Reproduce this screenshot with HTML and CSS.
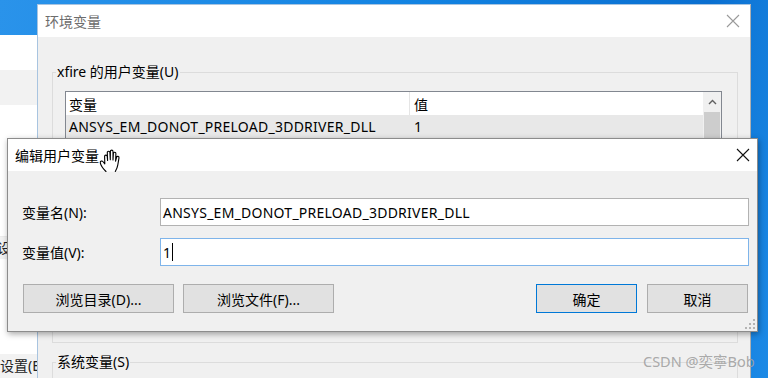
FILE: index.html
```html
<!DOCTYPE html>
<html lang="zh-CN">
<head>
<meta charset="utf-8">
<title>编辑用户变量</title>
<link rel="stylesheet" href="styles.css">
</head>
<body>
<div class="desktop">
  <div class="bgwin">
    <div class="bg-white h35"></div>
    <div class="bg-grey h35"></div>
    <div class="bg-white h132"></div>
    <div class="bg-grey h22 bgtext">设</div>
    <div class="bg-white h95"></div>
    <div class="bg-grey h24 bgtext">设置(E</div>
  </div>

  <div class="envwin">
    <div class="titlebar inactive">
      <span class="title">环境变量</span>
      <svg class="close" width="14" height="14" viewBox="0 0 14 14"><path d="M1 1L13 13M13 1L1 13" stroke="#9a9a9a" stroke-width="1.1" fill="none"/></svg>
    </div>
    <div class="envbody">
      <fieldset class="group user">
        <legend>xfire 的用户变量(U)</legend>
        <div class="listview">
          <div class="lv-main">
            <div class="lv-row lv-head"><span class="c1">变量</span><span class="c2">值</span></div>
            <div class="lv-row lv-sel"><span class="c1 latin">ANSYS_EM_DONOT_PRELOAD_3DDRIVER_DLL</span><span class="c2">1</span></div>
          </div>
          <div class="scrollbar">
            <div class="sb-up"><svg width="9" height="6" viewBox="0 0 9 6"><path d="M1 5L4.5 1.5L8 5" stroke="#606060" stroke-width="1.4" fill="none"/></svg></div>
            <div class="sb-thumb"></div>
          </div>
        </div>
      </fieldset>
      <fieldset class="group sys">
        <legend>系统变量(S)</legend>
      </fieldset>
    </div>
  </div>

  <div class="editwin">
    <div class="titlebar">
      <span class="title">编辑用户变量</span>
      <svg class="close" width="14" height="14" viewBox="0 0 14 14"><path d="M1 1L13 13M13 1L1 13" stroke="#111" stroke-width="1.1" fill="none"/></svg>
    </div>
    <div class="editbody">
      <div class="form">
        <label class="lbl">变量名(N):</label>
        <div class="input latin">ANSYS_EM_DONOT_PRELOAD_3DDRIVER_DLL</div>
        <label class="lbl">变量值(V):</label>
        <div class="input focus">1<span class="caret"></span></div>
      </div>
      <div class="buttons">
        <div class="btn wide">浏览目录(D)...</div>
        <div class="btn wide2">浏览文件(F)...</div>
        <div class="spacer"></div>
        <div class="btn small default">确定</div>
        <div class="btn small">取消</div>
      </div>
    </div>
    <svg class="grip" width="10" height="10" viewBox="0 0 10 10" fill="#b4b4b4">
      <rect x="8" y="0" width="2" height="2"/>
      <rect x="4" y="4" width="2" height="2"/><rect x="8" y="4" width="2" height="2"/>
      <rect x="0" y="8" width="2" height="2"/><rect x="4" y="8" width="2" height="2"/><rect x="8" y="8" width="2" height="2"/>
    </svg>
  </div>

  <svg class="hand" width="24" height="25" viewBox="0 0 24 25">
    <path d="M7 23.5C4.5 21 1.8 17.5 1.3 14.8C1 13 3 12.4 4.3 14L5.8 15.8L5.6 8.5C5.5 6.8 8 6.6 8.2 8.3L8.6 12.5L8.3 4.6C8.2 2.9 10.8 2.8 10.9 4.5L11.3 11.8L11.4 3.4C11.4 1.7 14 1.7 14 3.4L14 12L14.4 5.4C14.5 3.8 17 3.9 16.9 5.6L16.6 13.2L17.6 9.2C18 7.8 20.3 8.2 20 9.8L18.8 16.8C18.3 19.8 17.3 21.8 16.3 23.5" fill="#fff" stroke="#000" stroke-width="1.1" stroke-linejoin="round" stroke-linecap="round"/>
  </svg>

  <div class="watermark">CSDN @奕寧Bob</div>
</div>
</body>
</html>
```

FILE: styles.css
```css
* { box-sizing: border-box; }
html, body { margin: 0; padding: 0; }
body {
  width: 768px;
  height: 378px;
  overflow: hidden;
  font-family: "Noto Sans", "Noto Sans CJK SC", sans-serif;
  font-size: 14px;
  color: #000;
}
.desktop {
  position: relative;
  width: 768px;
  height: 378px;
  background: linear-gradient(100deg, #2a93ea 0%, #1283e2 50%, #0a6fd0 85%, #1c8ae6 100%);
  overflow: hidden;
}

/* background settings window */
.bgwin {
  position: absolute;
  left: 0;
  top: 35px;
  width: 60px;
  height: 343px;
  display: flex;
  flex-direction: column;
}
.bg-white { background: #ffffff; }
.bg-grey { background: #f2f2f2; }
.h35 { height: 35px; }
.h132 { height: 132px; border-bottom: 1px solid #ececec; }
.h22 { height: 22px; }
.h95 { height: 95px; }
.h24 { height: 24px; }
.bgtext {
  font-size: 14px;
  line-height: 22px;
  color: #222;
  white-space: nowrap;
  padding-left: 0;
}
.h22.bgtext { text-indent: -3px; }
.h24.bgtext { line-height: 24px; }

.latin { letter-spacing: 0.25px; }

/* generic window parts */
.titlebar {
  height: 32px;
  background: #fff;
  display: flex;
  align-items: center;
  justify-content: space-between;
  padding: 0 10px 0 7px;
  flex-shrink: 0;
}
.titlebar .title { font-size: 14px; color: #000; }
.titlebar.inactive .title { color: #6d6d6d; }

/* environment variables window */
.envwin {
  position: absolute;
  left: 37px;
  top: 4px;
  width: 714px;
  height: 400px;
  border: 1px solid #a8c4e0;
  border-right-color: #b0b0b0;
  background: #f0f0f0;
  display: flex;
  flex-direction: column;
}
.envbody {
  flex: 1;
  background: #f0f0f0;
  padding: 25px 0 0 14px;
}
.group {
  margin: 0;
  padding: 0;
  width: 686px;
  border: 1px solid #dcdcdc;
}
.group legend {
  padding: 0 1px;
  margin-left: 3px;
  font-size: 14px;
  line-height: 20px;
  color: #000;
}
.group.user { height: 281px; }
.group.sys { margin-top: 9px; height: 60px; }

.listview {
  margin: 9px 0 0 12px;
  width: 657px;
  height: 200px;
  border: 1px solid #828790;
  background: #fff;
  display: flex;
}
.lv-main { flex: 1; }
.lv-row {
  height: 23px;
  display: flex;
  align-items: center;
  white-space: nowrap;
}
.lv-row .c1 {
  width: 344px;
  padding-left: 3px;
  height: 100%;
  display: flex;
  align-items: center;
}
.lv-row .c2 { padding-left: 4px; }
.lv-head .c1 { border-right: 1px solid #e5e5e5; }
.lv-sel { background: #e8e8e8; }
.scrollbar {
  width: 18px;
  background: #f0f0f0;
  display: flex;
  flex-direction: column;
}
.sb-up {
  height: 20px;
  display: flex;
  align-items: center;
  justify-content: center;
}
.sb-thumb {
  margin: 0 1px;
  height: 60px;
  background: #cdcdcd;
}

/* edit dialog */
.editwin {
  position: absolute;
  left: 7px;
  top: 138px;
  width: 751px;
  height: 194px;
  border: 1px solid #8c8c8c;
  background: #f0f0f0;
  box-shadow: 1px 2px 6px rgba(0, 0, 0, 0.35);
  display: flex;
  flex-direction: column;
}
.editwin .titlebar { padding: 0 7px 0 7px; }
.editbody {
  flex: 1;
  padding: 27px 8px 0 14px;
}
.form {
  display: grid;
  grid-template-columns: 138px 1fr;
  grid-auto-rows: 28px;
  row-gap: 12px;
  align-items: center;
}
.lbl { font-size: 14px; }
.input {
  height: 28px;
  background: #fff;
  border: 1px solid #b2b2b2;
  padding: 0 2px;
  display: flex;
  align-items: center;
  white-space: nowrap;
}
.input.focus { border-color: #7eb4ea; }
.caret {
  display: inline-block;
  width: 1px;
  height: 18px;
  background: #000;
  margin-left: 1px;
}
.buttons {
  margin-top: 18px;
  display: flex;
  gap: 9px;
  padding-left: 1px;
  padding-right: 1px;
}
.btn {
  height: 29px;
  background: #e1e1e1;
  border: 1px solid #adadad;
  display: flex;
  align-items: center;
  justify-content: center;
  font-size: 14px;
  white-space: nowrap;
}
.btn.wide { width: 151px; }
.btn.wide2 { width: 151px; }
.btn.small { width: 101px; }
.btn.default { border-color: #0078d7; margin-right: 1px; }
.spacer { flex: 1; }
.grip {
  position: absolute;
  right: 2px;
  bottom: 2px;
}

.hand {
  position: absolute;
  left: 99px;
  top: 148px;
}
.watermark {
  position: absolute;
  left: 643px;
  top: 350px;
  font-size: 14.5px;
  color: rgba(160, 160, 160, 0.9);
  white-space: nowrap;
}
```
